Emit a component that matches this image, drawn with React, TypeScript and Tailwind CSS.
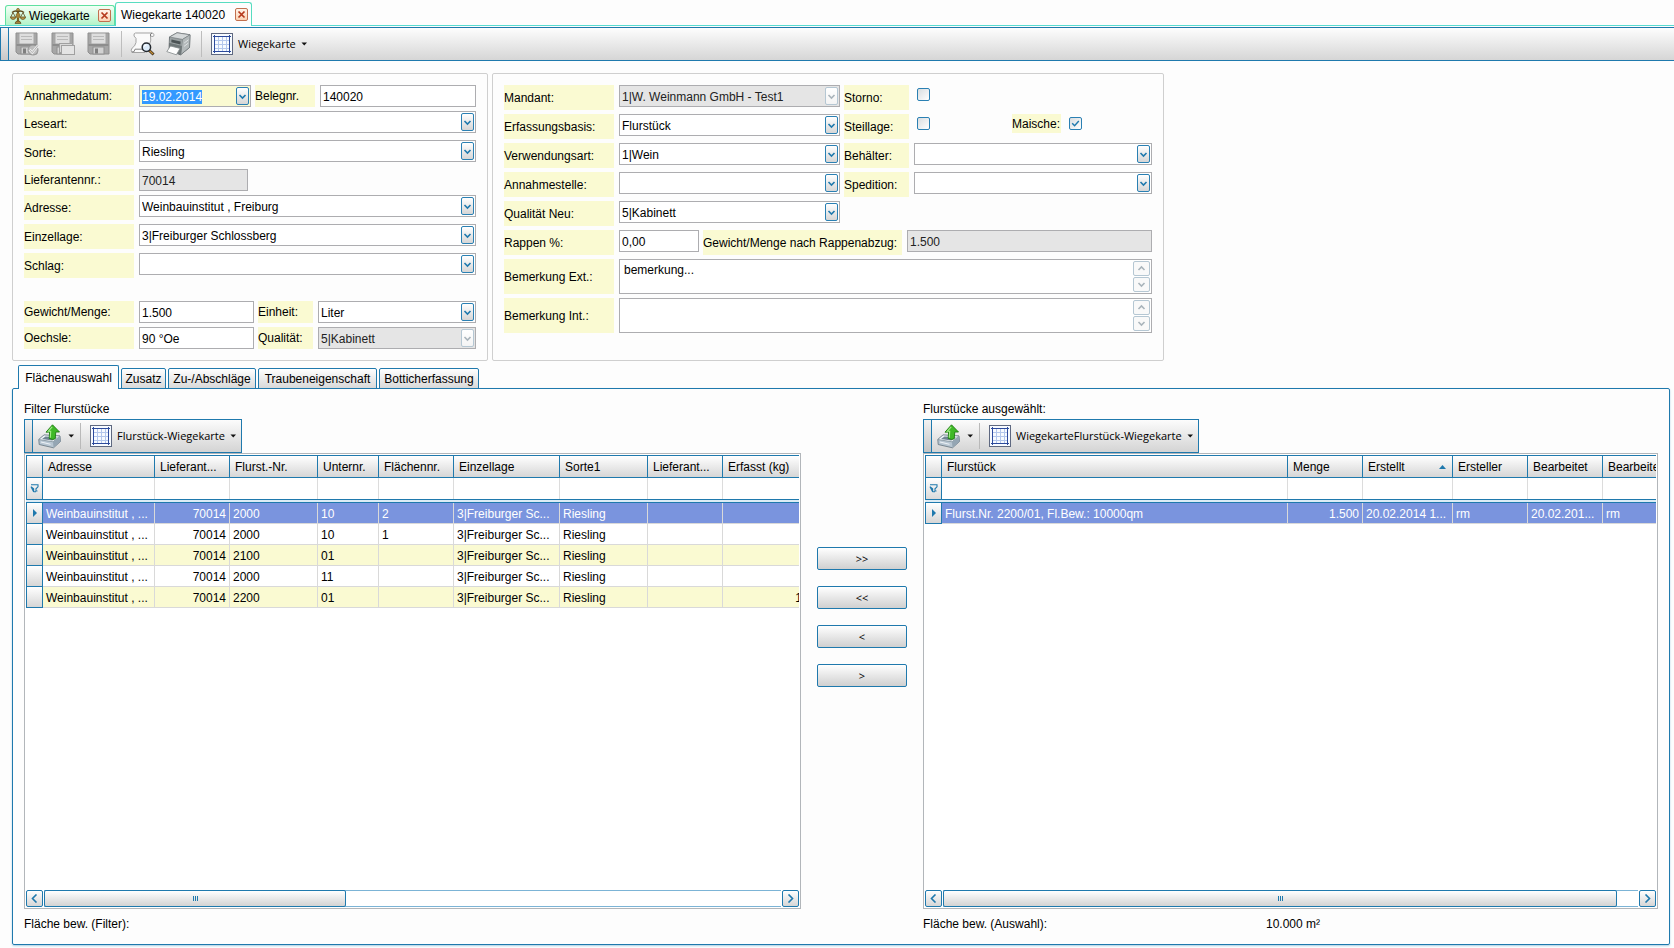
import React, { useEffect, useId, useRef, useState } from "react";
import clsx from "clsx";

type Column = {
  title: string;
  width: number;
  align?: "right";
  sorted?: boolean;
};

const plotColumns: Column[] = [
  { title: "Adresse", width: 112 },
  { title: "Lieferant...", width: 75, align: "right" },
  { title: "Flurst.-Nr.", width: 88 },
  { title: "Unternr.", width: 61 },
  { title: "Flächennr.", width: 75 },
  { title: "Einzellage", width: 106 },
  { title: "Sorte1", width: 88 },
  { title: "Lieferant...", width: 75 },
  { title: "Erfasst (kg)", width: 83, align: "right" },
];

const plotRows = [
  ["Weinbauinstitut , ...", "70014", "2000", "10", "2", "3|Freiburger Sc...", "Riesling", "", ""],
  ["Weinbauinstitut , ...", "70014", "2000", "10", "1", "3|Freiburger Sc...", "Riesling", "", ""],
  ["Weinbauinstitut , ...", "70014", "2100", "01", "", "3|Freiburger Sc...", "Riesling", "", ""],
  ["Weinbauinstitut , ...", "70014", "2000", "11", "", "3|Freiburger Sc...", "Riesling", "", ""],
  ["Weinbauinstitut , ...", "70014", "2200", "01", "", "3|Freiburger Sc...", "Riesling", "", "1"],
];

const selectedColumns: Column[] = [
  { title: "Flurstück", width: 346 },
  { title: "Menge", width: 75, align: "right" },
  { title: "Erstellt", width: 90, sorted: true },
  { title: "Ersteller", width: 75 },
  { title: "Bearbeitet", width: 75 },
  { title: "Bearbeiter", width: 75 },
];

const selectedRows = [
  ["Flurst.Nr. 2200/01, Fl.Bew.: 10000qm", "1.500", "20.02.2014 1...", "rm", "20.02.201...", "rm"],
];

const tabs = [
  { title: "Flächenauswahl", width: "w-[101px]" },
  { title: "Zusatz", width: "w-[45px]" },
  { title: "Zu-/Abschläge", width: "w-[88px]" },
  { title: "Traubeneigenschaft", width: "w-[119px]" },
  { title: "Botticherfassung", width: "w-[100px]" },
];

/* ---------- icons ---------- */

function Chevron({ dir = "down", className }: { dir?: "down" | "up" | "left" | "right"; className?: string }) {
  const paths = {
    down: "M1.5 3 L4.5 6 L7.5 3",
    up: "M1.5 6 L4.5 3 L7.5 6",
    left: "M6.5 0.5 L2.5 4.5 L6.5 8.5",
    right: "M2.5 0.5 L6.5 4.5 L2.5 8.5",
  };
  return (
    <svg width="9" height="9" viewBox="0 0 9 9" fill="none" className={className}>
      <path d={paths[dir]} stroke="currentColor" strokeWidth="1.6" />
    </svg>
  );
}

function Caret() {
  return (
    <svg width="7" height="4" viewBox="0 0 7 4" className="shrink-0">
      <path d="M0.5 0.5 H6 L3.25 3.5 Z" fill="#111" />
    </svg>
  );
}

function ScaleIcon() {
  return (
    <svg width="16" height="16" viewBox="0 0 16 16" fill="none" className="shrink-0">
      <path d="M8 1.5 V14" stroke="#7d6423" strokeWidth="2.2" />
      <path d="M2 4.5 Q5 2.2 8 3.6 Q11 2.2 14 4.5" stroke="#5d4a1c" strokeWidth="1.5" />
      <path d="M3 4.5 L0.8 9 M3 4.5 L5.4 9 M13 4.5 L10.6 9 M13 4.5 L15.2 9" stroke="#6a5b33" strokeWidth="0.9" />
      <path d="M0.3 9 H6 Q5.4 11.5 3.1 11.5 Q0.9 11.5 0.3 9 Z" fill="#b9974a" stroke="#5f4a18" strokeWidth="0.7" />
      <path d="M10 9 H15.7 Q15.1 11.5 12.9 11.5 Q10.6 11.5 10 9 Z" fill="#b9974a" stroke="#5f4a18" strokeWidth="0.7" />
      <path d="M5 15.4 Q5.4 13 8 13 Q10.6 13 11 15.4 Z" fill="#ad8a3c" stroke="#54441b" strokeWidth="0.7" />
      <circle cx="8" cy="1.8" r="1.4" fill="#c79f41" stroke="#54441b" strokeWidth="0.6" />
      <path d="M6.2 6.2 L8 4.4 L9.8 6.2 V9 L8 10.8 L6.2 9 Z" fill="#a98434" stroke="#5f4a18" strokeWidth="0.5" />
    </svg>
  );
}

function DiskIcon({ badge }: { badge?: "check" | "copy" }) {
  return (
    <svg width="24" height="24" viewBox="0 0 24 24" fill="none">
      <path d="M1 1 H22 V22 H3 L1 20 Z" fill="#a6a6a6" stroke="#8f8f8f" />
      <rect x="4.5" y="1.5" width="14" height="10" fill="#dedede" />
      <path d="M6 4.5 H17 M6 7.5 H17" stroke="#b9b9b9" />
      <rect x="1.5" y="12" width="20" height="2" fill="#8d8d8d" />
      <rect x="6" y="15" width="11" height="7" fill="#d2d2d2" stroke="#909090" />
      <rect x="8" y="16.5" width="3" height="5" fill="#7f7f7f" />
      {badge === "check" && (
        <>
          <circle cx="18" cy="18" r="5" fill="#bcbcbc" stroke="#949494" />
          <path d="M14.5 17.5 L17.3 20.6 L23 13.5" stroke="#ececec" strokeWidth="2.6" />
          <path d="M14.5 17.5 L17.3 20.6 L23 13.5" stroke="#a2a2a2" strokeWidth="0.8" />
        </>
      )}
      {badge === "copy" && (
        <>
          <rect x="8.5" y="11.5" width="13" height="9" fill="#d9d9d9" stroke="#a0a0a0" />
          <rect x="10.5" y="13.5" width="13" height="9" fill="#e4e4e4" stroke="#a0a0a0" />
        </>
      )}
    </svg>
  );
}

function PreviewIcon() {
  return (
    <svg width="26" height="24" viewBox="0 0 26 24" fill="none">
      <path
        d="M5.5 1 Q3.5 1.2 4 4 Q7 5.5 6 10.5 Q5 14.5 2.2 16 Q0.2 18 2 20.5 H15 Q18.5 18 19.5 12.5 Q21.5 8 20.5 4 Q24 5.5 24 2.8 Q23.5 1 22 1 Z"
        fill="#fafafa"
        stroke="#a3a3a3"
      />
      <path d="M1.8 20 Q4.8 20.5 5 17.2 H14" stroke="#868686" />
      <path d="M20.5 4 Q19.8 1.6 22 1" stroke="#777" />
      <path d="M19 18.2 L23.6 22.6" stroke="#3d3020" strokeWidth="2.8" />
      <path d="M19 18.2 L23 22" stroke="#c89035" strokeWidth="1.2" />
      <circle cx="16.4" cy="15.2" r="4.2" fill="#dcebf9" stroke="#23282e" strokeWidth="1.5" />
      <path d="M14.2 14.6 Q14.8 12.8 16.6 12.8" stroke="#fff" strokeWidth="1.2" />
    </svg>
  );
}

function PrinterIcon() {
  return (
    <svg width="25" height="24" viewBox="0 0 25 24" fill="none">
      <path d="M3.5 5 L11 0.8 L24 2.8 L23.5 15.5 L14.5 22.8 L3 18.5 Z" fill="#7f8788" stroke="#50575a" strokeWidth="0.8" />
      <path d="M3.5 5 L11 0.8 L24 2.8 L16.5 7.4 Z" fill="#d5d9da" stroke="#7a8082" strokeWidth="0.7" />
      <path d="M16.5 7.4 L24 2.8 L23.5 15.5 L14.8 22.6 Z" fill="#b3b9ba" stroke="#6d7476" strokeWidth="0.5" />
      <path d="M3.8 5.6 L16.2 8 L15.8 14 L3.4 11 Z" fill="#9aa1a2" />
      <path d="M5.5 7.6 L14.6 9.5 L14.4 12.4 L5.3 10.3 Z" fill="#4c5355" />
      <path d="M3.4 11 L15.8 14 L15 22.4 L3.2 18.4 Z" fill="#6f7778" />
      <path d="M4.5 14 L14 16.4 L10.4 22.8 L0.8 19.6 Z" fill="#fdfdfd" stroke="#848a8b" strokeWidth="0.8" />
      <path d="M18.2 11 L22.4 7.8 M18 14.4 L22.2 11.2" stroke="#e4e8e9" strokeWidth="0.9" />
    </svg>
  );
}

function GridIcon() {
  return (
    <svg width="22" height="22" viewBox="0 0 22 22" fill="none" className="shrink-0">
      <rect x="0.5" y="0.5" width="21" height="21" fill="#f7fbff" stroke="#5e6880" />
      <path d="M7.5 3 V19 M11.5 3 V19 M15.5 3 V19 M3 7.5 H19 M3 11.5 H19 M3 15.5 H19" stroke="#b3c7ec" />
      <path d="M3.5 2 V20 M18.5 2 V20 M2 3.5 H20 M2 18.5 H20" stroke="#2c4a9c" />
    </svg>
  );
}

function ExportIcon() {
  return (
    <svg width="24" height="25" viewBox="0 0 24 25" fill="none">
      <path d="M0.8 15.5 L6 11 L22 12 L22.5 17.5 L15.5 23.8 L1.2 20.5 Z" fill="#b8c6d2" stroke="#63737f" strokeWidth="0.8" />
      <path d="M0.8 15.5 L6 11 L22 12 L15 17.8 Z" fill="#eef3f7" stroke="#75858f" strokeWidth="0.7" />
      <path d="M4 15 L7.5 12.4 L19 13.2 L14.3 16.5 Z" fill="#6f8391" />
      <path d="M15 17.8 L22 12 L22.5 17.5 L15.5 23.8 Z" fill="#94a5b3" />
      <path d="M3 18 L12.5 20.3" stroke="#eef3f7" />
      <path d="M14.5 0.8 L21.5 8 H17.8 L17.2 14.8 Q14.5 16.2 11.2 14.4 L11.6 8 L8 8.2 Z" fill="#3fb928" stroke="#1d7a12" strokeWidth="0.9" />
      <path d="M14.2 2.8 L10.3 7.2 H12.7 L12.3 13.8" stroke="#a4ec8a" strokeWidth="1.1" />
    </svg>
  );
}

function FilterIcon() {
  return (
    <svg width="9" height="9" viewBox="0 0 9 9" fill="none">
      <path d="M1 0.8 H8 V2.8 L6 4.8 V7 H7.5 M3.5 7.8 H6 M3.6 7.8 V4.8 L1 2.8 Z" stroke="#1f79ad" strokeWidth="1.1" />
    </svg>
  );
}

/* ---------- form parts ---------- */

function FieldLabel({ htmlFor, children, className }: { htmlFor: string; children: React.ReactNode; className?: string }) {
  return (
    <label
      htmlFor={htmlFor}
      className={clsx("flex shrink-0 items-center self-stretch whitespace-nowrap bg-[#fafad2]", className)}
    >
      {children}
    </label>
  );
}

function Combo({ id, value, disabled, className }: { id: string; value: string; disabled?: boolean; className?: string }) {
  return (
    <div className={clsx("relative h-[22px]", className)}>
      <select
        id={id}
        defaultValue={value}
        disabled={disabled}
        className={clsx(
          "block h-full w-full appearance-none border border-[#adadb0] pt-px pr-5 pl-0.5 outline-none disabled:opacity-100",
          disabled ? "bg-[#e5e5e5] text-[#222]" : "bg-white"
        )}
      >
        <option value={value}>{value}</option>
      </select>
      <ComboArrow disabled={disabled} />
    </div>
  );
}

function ComboArrow({ disabled }: { disabled?: boolean }) {
  return (
    <span
      className={clsx(
        "pointer-events-none absolute top-0.5 right-0.5 grid h-[18px] w-[13px] place-items-center rounded-[2px] border bg-linear-to-b from-white",
        disabled ? "border-[#b5c7d3] to-[#f4f4f4] text-[#a9b4bb]" : "border-[#2a80b3] to-[#d6d6d6] text-[#1f79ad]"
      )}
    >
      <Chevron />
    </span>
  );
}

function TextField({ id, value, readOnly, className }: { id: string; value: string; readOnly?: boolean; className?: string }) {
  return (
    <input
      id={id}
      type="text"
      defaultValue={value}
      readOnly={readOnly}
      className={clsx(
        "h-[22px] min-w-0 border border-[#adadb0] px-0.5 pt-px outline-none",
        readOnly ? "bg-[#e5e5e5] text-[#222]" : "bg-white",
        className
      )}
    />
  );
}

function DateField({ id, value }: { id: string; value: string }) {
  const ref = useRef<HTMLInputElement>(null);
  useEffect(() => {
    ref.current?.focus();
    ref.current?.select();
  }, []);
  return (
    <div className="relative h-[22px] w-28">
      <input
        ref={ref}
        id={id}
        type="text"
        defaultValue={value}
        className="block h-full w-full border border-[#adadb0] bg-[#fafad2] px-0.5 pt-px outline-none selection:bg-[#3399ff] selection:text-white"
      />
      <ComboArrow />
    </div>
  );
}

function CheckBox({ id, checked }: { id: string; checked?: boolean }) {
  return (
    <span className="relative mt-[3px] ml-[3px] block size-[13px]">
      <input
        id={id}
        type="checkbox"
        defaultChecked={checked}
        className="peer block size-[13px] appearance-none rounded-[2px] border border-[#2a80b3] bg-linear-to-br from-[#d9dde0] to-white"
      />
      <svg
        viewBox="0 0 13 13"
        fill="none"
        className="pointer-events-none absolute inset-0 hidden size-[13px] peer-checked:block"
      >
        <path d="M3.2 6.2 L5.6 8.8 L9.8 4" stroke="#1f79ad" strokeWidth="1.4" />
      </svg>
    </span>
  );
}

function MemoField({ id, value }: { id: string; value: string }) {
  return (
    <div className="flex h-[35px] flex-1 border border-[#adadb0] bg-white p-px">
      <textarea
        id={id}
        defaultValue={value}
        className="block h-full min-w-0 flex-1 resize-none overflow-hidden px-[3px] pt-px leading-4 outline-none"
      />
      <div className="flex w-[17px] flex-col gap-px text-[#a9b4bb]">
        <button type="button" aria-label="Nach oben" className="grid flex-1 place-items-center rounded-[2px] border border-[#b5c7d3] bg-[#f9f9f9]">
          <Chevron dir="up" />
        </button>
        <button type="button" aria-label="Nach unten" className="grid flex-1 place-items-center rounded-[2px] border border-[#b5c7d3] bg-[#f9f9f9]">
          <Chevron />
        </button>
      </div>
    </div>
  );
}

/* label and control that belong together */
function Pair({ children, className }: { children: React.ReactNode; className?: string }) {
  return <div className={clsx("flex min-w-0 items-start gap-[5px]", className)}>{children}</div>;
}

function DeliveryForm() {
  const uid = useId();
  return (
    <section className="flex w-[476px] shrink-0 flex-col gap-1 rounded-[2px] border border-[#cfcfcf] p-[11px]">
      <div className="flex h-[22px] gap-1">
        <Pair>
          <FieldLabel htmlFor={uid + "datum"} className="w-[110px]">Annahmedatum:</FieldLabel>
          <DateField id={uid + "datum"} value="19.02.2014" />
        </Pair>
        <Pair className="flex-1">
          <FieldLabel htmlFor={uid + "beleg"} className="w-[60px]">Belegnr.</FieldLabel>
          <TextField id={uid + "beleg"} value="140020" className="flex-1" />
        </Pair>
      </div>
      <Pair className="h-[25px]">
        <FieldLabel htmlFor={uid + "leseart"} className="w-[110px]">Leseart:</FieldLabel>
        <Combo id={uid + "leseart"} value="" className="flex-1" />
      </Pair>
      <Pair className="h-[25px]">
        <FieldLabel htmlFor={uid + "sorte"} className="w-[110px]">Sorte:</FieldLabel>
        <Combo id={uid + "sorte"} value="Riesling" className="flex-1" />
      </Pair>
      <Pair className="h-[22px]">
        <FieldLabel htmlFor={uid + "lief"} className="w-[110px]">Lieferantennr.:</FieldLabel>
        <TextField id={uid + "lief"} value="70014" readOnly className="w-[109px]" />
      </Pair>
      <Pair className="h-[25px]">
        <FieldLabel htmlFor={uid + "adresse"} className="w-[110px]">Adresse:</FieldLabel>
        <Combo id={uid + "adresse"} value="Weinbauinstitut , Freiburg" className="flex-1" />
      </Pair>
      <Pair className="h-[25px]">
        <FieldLabel htmlFor={uid + "lage"} className="w-[110px]">Einzellage:</FieldLabel>
        <Combo id={uid + "lage"} value="3|Freiburger Schlossberg" className="flex-1" />
      </Pair>
      <Pair className="h-[25px]">
        <FieldLabel htmlFor={uid + "schlag"} className="w-[110px]">Schlag:</FieldLabel>
        <Combo id={uid + "schlag"} value="" className="flex-1" />
      </Pair>
      <div className="mt-[19px] flex h-[22px] gap-1">
        <Pair>
          <FieldLabel htmlFor={uid + "menge"} className="w-[110px]">Gewicht/Menge:</FieldLabel>
          <TextField id={uid + "menge"} value="1.500" className="w-[115px]" />
        </Pair>
        <Pair className="flex-1">
          <FieldLabel htmlFor={uid + "einheit"} className="w-[55px]">Einheit:</FieldLabel>
          <Combo id={uid + "einheit"} value="Liter" className="flex-1" />
        </Pair>
      </div>
      <div className="flex h-[22px] gap-1">
        <Pair>
          <FieldLabel htmlFor={uid + "oechsle"} className="w-[110px]">Oechsle:</FieldLabel>
          <TextField id={uid + "oechsle"} value="90 °Oe" className="w-[115px]" />
        </Pair>
        <Pair className="flex-1">
          <FieldLabel htmlFor={uid + "qual"} className="w-[55px]">Qualität:</FieldLabel>
          <Combo id={uid + "qual"} value="5|Kabinett" disabled className="flex-1" />
        </Pair>
      </div>
    </section>
  );
}

function ClientForm() {
  const uid = useId();
  return (
    <section className="flex w-[672px] shrink-0 flex-col gap-1 rounded-[2px] border border-[#cfcfcf] p-[11px]">
      <div className="flex h-[25px] gap-1">
        <Pair>
          <FieldLabel htmlFor={uid + "mandant"} className="w-[110px]">Mandant:</FieldLabel>
          <Combo id={uid + "mandant"} value="1|W. Weinmann GmbH - Test1" disabled className="w-[221px]" />
        </Pair>
        <Pair>
          <FieldLabel htmlFor={uid + "storno"} className="w-[65px]">Storno:</FieldLabel>
          <CheckBox id={uid + "storno"} />
        </Pair>
      </div>
      <div className="flex h-[25px] gap-1">
        <Pair>
          <FieldLabel htmlFor={uid + "basis"} className="w-[110px]">Erfassungsbasis:</FieldLabel>
          <Combo id={uid + "basis"} value="Flurstück" className="w-[221px]" />
        </Pair>
        <Pair>
          <FieldLabel htmlFor={uid + "steil"} className="w-[65px]">Steillage:</FieldLabel>
          <CheckBox id={uid + "steil"} />
        </Pair>
        <Pair className="ml-[78px] h-[19px]">
          <FieldLabel htmlFor={uid + "maische"} className="w-[49px]">Maische:</FieldLabel>
          <CheckBox id={uid + "maische"} checked />
        </Pair>
      </div>
      <div className="flex h-[25px] gap-1">
        <Pair>
          <FieldLabel htmlFor={uid + "art"} className="w-[110px]">Verwendungsart:</FieldLabel>
          <Combo id={uid + "art"} value="1|Wein" className="w-[221px]" />
        </Pair>
        <Pair className="flex-1">
          <FieldLabel htmlFor={uid + "behaelter"} className="w-[65px]">Behälter:</FieldLabel>
          <Combo id={uid + "behaelter"} value="" className="flex-1" />
        </Pair>
      </div>
      <div className="flex h-[25px] gap-1">
        <Pair>
          <FieldLabel htmlFor={uid + "stelle"} className="w-[110px]">Annahmestelle:</FieldLabel>
          <Combo id={uid + "stelle"} value="" className="w-[221px]" />
        </Pair>
        <Pair className="flex-1">
          <FieldLabel htmlFor={uid + "sped"} className="w-[65px]">Spedition:</FieldLabel>
          <Combo id={uid + "sped"} value="" className="flex-1" />
        </Pair>
      </div>
      <Pair className="h-[25px]">
        <FieldLabel htmlFor={uid + "neu"} className="w-[110px]">Qualität Neu:</FieldLabel>
        <Combo id={uid + "neu"} value="5|Kabinett" className="w-[221px]" />
      </Pair>
      <div className="flex h-[25px] gap-1">
        <Pair>
          <FieldLabel htmlFor={uid + "rappen"} className="w-[110px]">Rappen %:</FieldLabel>
          <TextField id={uid + "rappen"} value="0,00" className="w-20" />
        </Pair>
        <Pair className="flex-1">
          <FieldLabel htmlFor={uid + "abzug"} className="w-[199px]">Gewicht/Menge nach Rappenabzug:</FieldLabel>
          <TextField id={uid + "abzug"} value="1.500" readOnly className="flex-1" />
        </Pair>
      </div>
      <Pair>
        <FieldLabel htmlFor={uid + "ext"} className="w-[110px]">Bemerkung Ext.:</FieldLabel>
        <MemoField id={uid + "ext"} value="bemerkung..." />
      </Pair>
      <Pair>
        <FieldLabel htmlFor={uid + "int"} className="w-[110px]">Bemerkung Int.:</FieldLabel>
        <MemoField id={uid + "int"} value="" />
      </Pair>
    </section>
  );
}

/* ---------- grids ---------- */

function GridToolbar({ title }: { title: string }) {
  return (
    <div className="flex h-[34px] self-start border border-[#1f79ad] bg-linear-to-b from-[#fcfcfc] to-[#d4d4d4] font-['Open_Sans',sans-serif] text-[11px]">
      <span className="w-2 shrink-0 border-r border-[#1f79ad] bg-linear-to-b from-[#f2f2f2] to-[#c4c4c4]" />
      <button type="button" aria-label="Exportieren" className="flex items-center gap-1.5 pr-[5px] pl-[5px]">
        <ExportIcon />
        <Caret />
      </button>
      <span className="my-[3px] w-px bg-[#b9b9b9]" />
      <button type="button" className="flex items-center gap-[5px] pr-1 pl-[9px]">
        <GridIcon />
        <span>{title}</span>
        <Caret />
      </button>
    </div>
  );
}

function ScrollBar({ thumb }: { thumb: number }) {
  const button =
    "grid w-[17px] shrink-0 place-items-center rounded-[2px] border border-[#1f79ad] bg-linear-to-b from-white to-[#d6d6d6] text-[#1f79ad]";
  return (
    <div className="flex h-[17px] shrink-0 gap-px">
      <button type="button" aria-label="Nach links" className={button}>
        <Chevron dir="left" />
      </button>
      <div className="flex flex-1 border-y border-[#7cb4d6] bg-white">
        <div
          className="-my-px flex items-center justify-center gap-px rounded-[2px] border border-[#1f79ad] bg-linear-to-b from-white to-[#d3d3d3]"
          style={{ width: `${thumb}%` }}
        >
          <i className="h-[5px] w-px bg-[#1f79ad]" />
          <i className="h-[5px] w-px bg-[#1f79ad]" />
          <i className="h-[5px] w-px bg-[#1f79ad]" />
        </div>
      </div>
      <button type="button" aria-label="Nach rechts" className={button}>
        <Chevron dir="right" />
      </button>
    </div>
  );
}

function DataGrid({ columns, rows, thumb }: { columns: Column[]; rows: string[][]; thumb: number }) {
  const total = 17 + columns.reduce((sum, c) => sum + c.width, 0);
  return (
    <div className="flex min-h-[200px] flex-1 flex-col border border-[#b2b6ba] bg-white p-px">
      <div className="flex-1 overflow-hidden">
        <table className="table-fixed border-separate border-spacing-0" style={{ width: total }}>
          <colgroup>
            <col style={{ width: 17 }} />
            {columns.map((c, i) => (
              <col key={i} style={{ width: c.width }} />
            ))}
          </colgroup>
          <thead>
            <tr className="h-[23px]">
              <td className="border border-[#1f79ad] bg-linear-to-b from-white to-[#dadada] p-0" />
              {columns.map((c, i) => (
                <th
                  key={i}
                  scope="col"
                  className="overflow-hidden border-y border-r border-[#1f79ad] bg-linear-to-b from-white to-[#d6d6d6] py-0 pr-1 pl-[5px] text-left font-normal whitespace-nowrap"
                >
                  <span className="flex items-center justify-between">
                    {c.title}
                    {c.sorted && (
                      <svg width="7" height="4" viewBox="0 0 7 4" className="mr-0.5">
                        <path d="M0 4 L3.5 0 L7 4 Z" fill="#1f79ad" />
                      </svg>
                    )}
                  </span>
                </th>
              ))}
            </tr>
            <tr className="h-[21px]">
              <td className="border-x border-[#1f79ad] bg-linear-to-b from-white to-[#dadada] p-0">
                <span className="grid place-items-center">
                  <FilterIcon />
                </span>
              </td>
              {columns.map((c, i) => (
                <td key={i} className="border-r border-[#dcdcdc] p-0">
                  <input aria-label={"Filter " + c.title} className="block h-5 w-full px-[3px] outline-none" />
                </td>
              ))}
            </tr>
          </thead>
          <tbody>
            <tr className="h-1">
              <td colSpan={columns.length + 1} className="h-1 border-y border-[#1f79ad] bg-[#dcecf5] p-0" />
            </tr>
            {rows.map((row, r) => (
              <tr
                key={r}
                className={clsx(
                  "h-[21px]",
                  r === 0 ? "bg-[#7a94de] text-white" : r % 2 === 0 ? "bg-[#fafad2]" : "bg-white"
                )}
              >
                <td className="border-x border-b border-[#1f79ad] bg-linear-to-b from-white to-[#d6d6d6] p-0">
                  {r === 0 && (
                    <svg width="4" height="8" viewBox="0 0 4 8" className="mx-auto">
                      <path d="M0 0 L4 4 L0 8 Z" fill="#1f79ad" />
                    </svg>
                  )}
                </td>
                {row.map((cell, i) => (
                  <td
                    key={i}
                    className={clsx(
                      "overflow-hidden border-r border-b border-[#d9d9d9] px-[3px] pt-0.5 pb-0 whitespace-nowrap",
                      columns[i].align === "right" && "text-right"
                    )}
                  >
                    {cell}
                  </td>
                ))}
              </tr>
            ))}
          </tbody>
        </table>
      </div>
      <ScrollBar thumb={thumb} />
    </div>
  );
}

function MoveButtons() {
  return (
    <div className="flex w-[90px] shrink-0 flex-col gap-4 pt-[146px] font-['Open_Sans',sans-serif] text-[11px]">
      {[">>", "<<", "<", ">"].map((text) => (
        <button
          key={text}
          type="button"
          className="h-[23px] rounded-[2px] border border-[#1f79ad] bg-linear-to-b from-white to-[#d0d0d0]"
        >
          {text}
        </button>
      ))}
    </div>
  );
}

/* ---------- window frame ---------- */

function CloseButton() {
  return (
    <button
      type="button"
      aria-label="Schließen"
      className="grid size-[13px] place-items-center rounded-[2px] border border-[#c2704f] bg-linear-to-b from-[#fff4ea] to-[#fbd3b4]"
    >
      <svg width="9" height="9" viewBox="0 0 9 9">
        <path d="M1.5 1.5 L7.5 7.5 M7.5 1.5 L1.5 7.5" stroke="#b5391c" strokeWidth="1.7" />
      </svg>
    </button>
  );
}

function WindowTabs() {
  return (
    <div className="flex h-[26px] shrink-0 items-end border-b border-[#57dcd0] pl-[5px]">
      <div className="flex h-[20px] items-center gap-[3px] rounded-t-[3px] border border-b-0 border-[#5fe0a0] bg-linear-to-b from-[#f2fff6] to-[#b4f3c8] pr-[3px] pl-1">
        <ScaleIcon />
        <span className="w-[66px]">Wiegekarte</span>
        <CloseButton />
      </div>
      <div className="-mb-px flex h-6 items-center rounded-t-[3px] border border-b-0 border-[#57dcc0] bg-[#fdfdfd] pr-[3px] pl-[5px]">
        <span className="w-[114px]">Wiegekarte 140020</span>
        <CloseButton />
      </div>
    </div>
  );
}

function MainToolbar() {
  return (
    <div className="mt-px flex h-[34px] shrink-0 border-y border-l border-[#1f79ad] bg-linear-to-b from-[#fdfdfd] to-[#d6d6d6] font-['Open_Sans',sans-serif] text-[11px]">
      <span className="w-2 shrink-0 border-r border-[#1f79ad] bg-linear-to-b from-[#f6f6f6] to-[#c8c8c8]" />
      <div className="flex items-center gap-3 pr-2.5 pl-1.5">
        <button type="button" aria-label="Speichern und schließen"><DiskIcon badge="check" /></button>
        <button type="button" aria-label="Speichern und neu"><DiskIcon badge="copy" /></button>
        <button type="button" aria-label="Speichern"><DiskIcon /></button>
      </div>
      <span className="my-[3px] w-px bg-[#bdbdbd]" />
      <div className="flex items-center gap-2.5 pr-2.5 pl-2">
        <button type="button" aria-label="Vorschau"><PreviewIcon /></button>
        <button type="button" aria-label="Drucken"><PrinterIcon /></button>
      </div>
      <span className="my-[3px] w-px bg-[#bdbdbd]" />
      <button type="button" className="flex items-center gap-[5px] pl-[9px]">
        <GridIcon />
        <span>Wiegekarte</span>
        <Caret />
      </button>
    </div>
  );
}

export default function App() {
  const [active, setActive] = useState(0);

  return (
    <main className="flex min-h-screen flex-col bg-[#fdfdfd] font-['Liberation_Sans',Arial,sans-serif] text-[12px] leading-4 text-black">
      <WindowTabs />
      <MainToolbar />

      <div className="flex flex-1 flex-col pt-3 pr-1 pb-[3px] pl-3">
        <div className="flex gap-1">
          <DeliveryForm />
          <ClientForm />
        </div>

        <div role="tablist" className="relative z-10 mt-1 -mb-px flex h-6 items-end gap-0.5 pl-1.5">
          {tabs.map((tab, i) => (
            <button
              key={tab.title}
              type="button"
              role="tab"
              aria-selected={active === i}
              onClick={() => setActive(i)}
              className={clsx(
                "rounded-t-[2px] border border-[#1f79ad] whitespace-nowrap",
                tab.width,
                active === i
                  ? "h-6 border-b-0 bg-[#fdfdfd]"
                  : "h-[21px] bg-linear-to-b from-white to-[#d9d9d9]"
              )}
            >
              {tab.title}
            </button>
          ))}
        </div>

        <div
          role="tabpanel"
          className="flex flex-1 gap-4 rounded-[2px] border border-[#1f79ad] px-[11px] pt-3 pb-3 shadow-[0_1px_2px_#a9cfe4]"
        >
          <section className="flex min-w-0 grow-[777] basis-0 flex-col">
            <h2 className="mb-0.5">Filter Flurstücke</h2>
            <GridToolbar title="Flurstück-Wiegekarte" />
            <DataGrid columns={plotColumns} rows={plotRows} thumb={41} />
            <p className="mt-[7px]">Fläche bew. (Filter):</p>
          </section>

          <MoveButtons />

          <section className="flex min-w-0 grow-[735] basis-0 flex-col">
            <h2 className="mb-0.5">Flurstücke ausgewählt:</h2>
            <GridToolbar title="WiegekarteFlurstück-Wiegekarte" />
            <DataGrid columns={selectedColumns} rows={selectedRows} thumb={97} />
            <p className="mt-[7px] flex">
              <span className="w-[343px]">Fläche bew. (Auswahl):</span>
              <span>10.000 m²</span>
            </p>
          </section>
        </div>
      </div>
    </main>
  );
}
